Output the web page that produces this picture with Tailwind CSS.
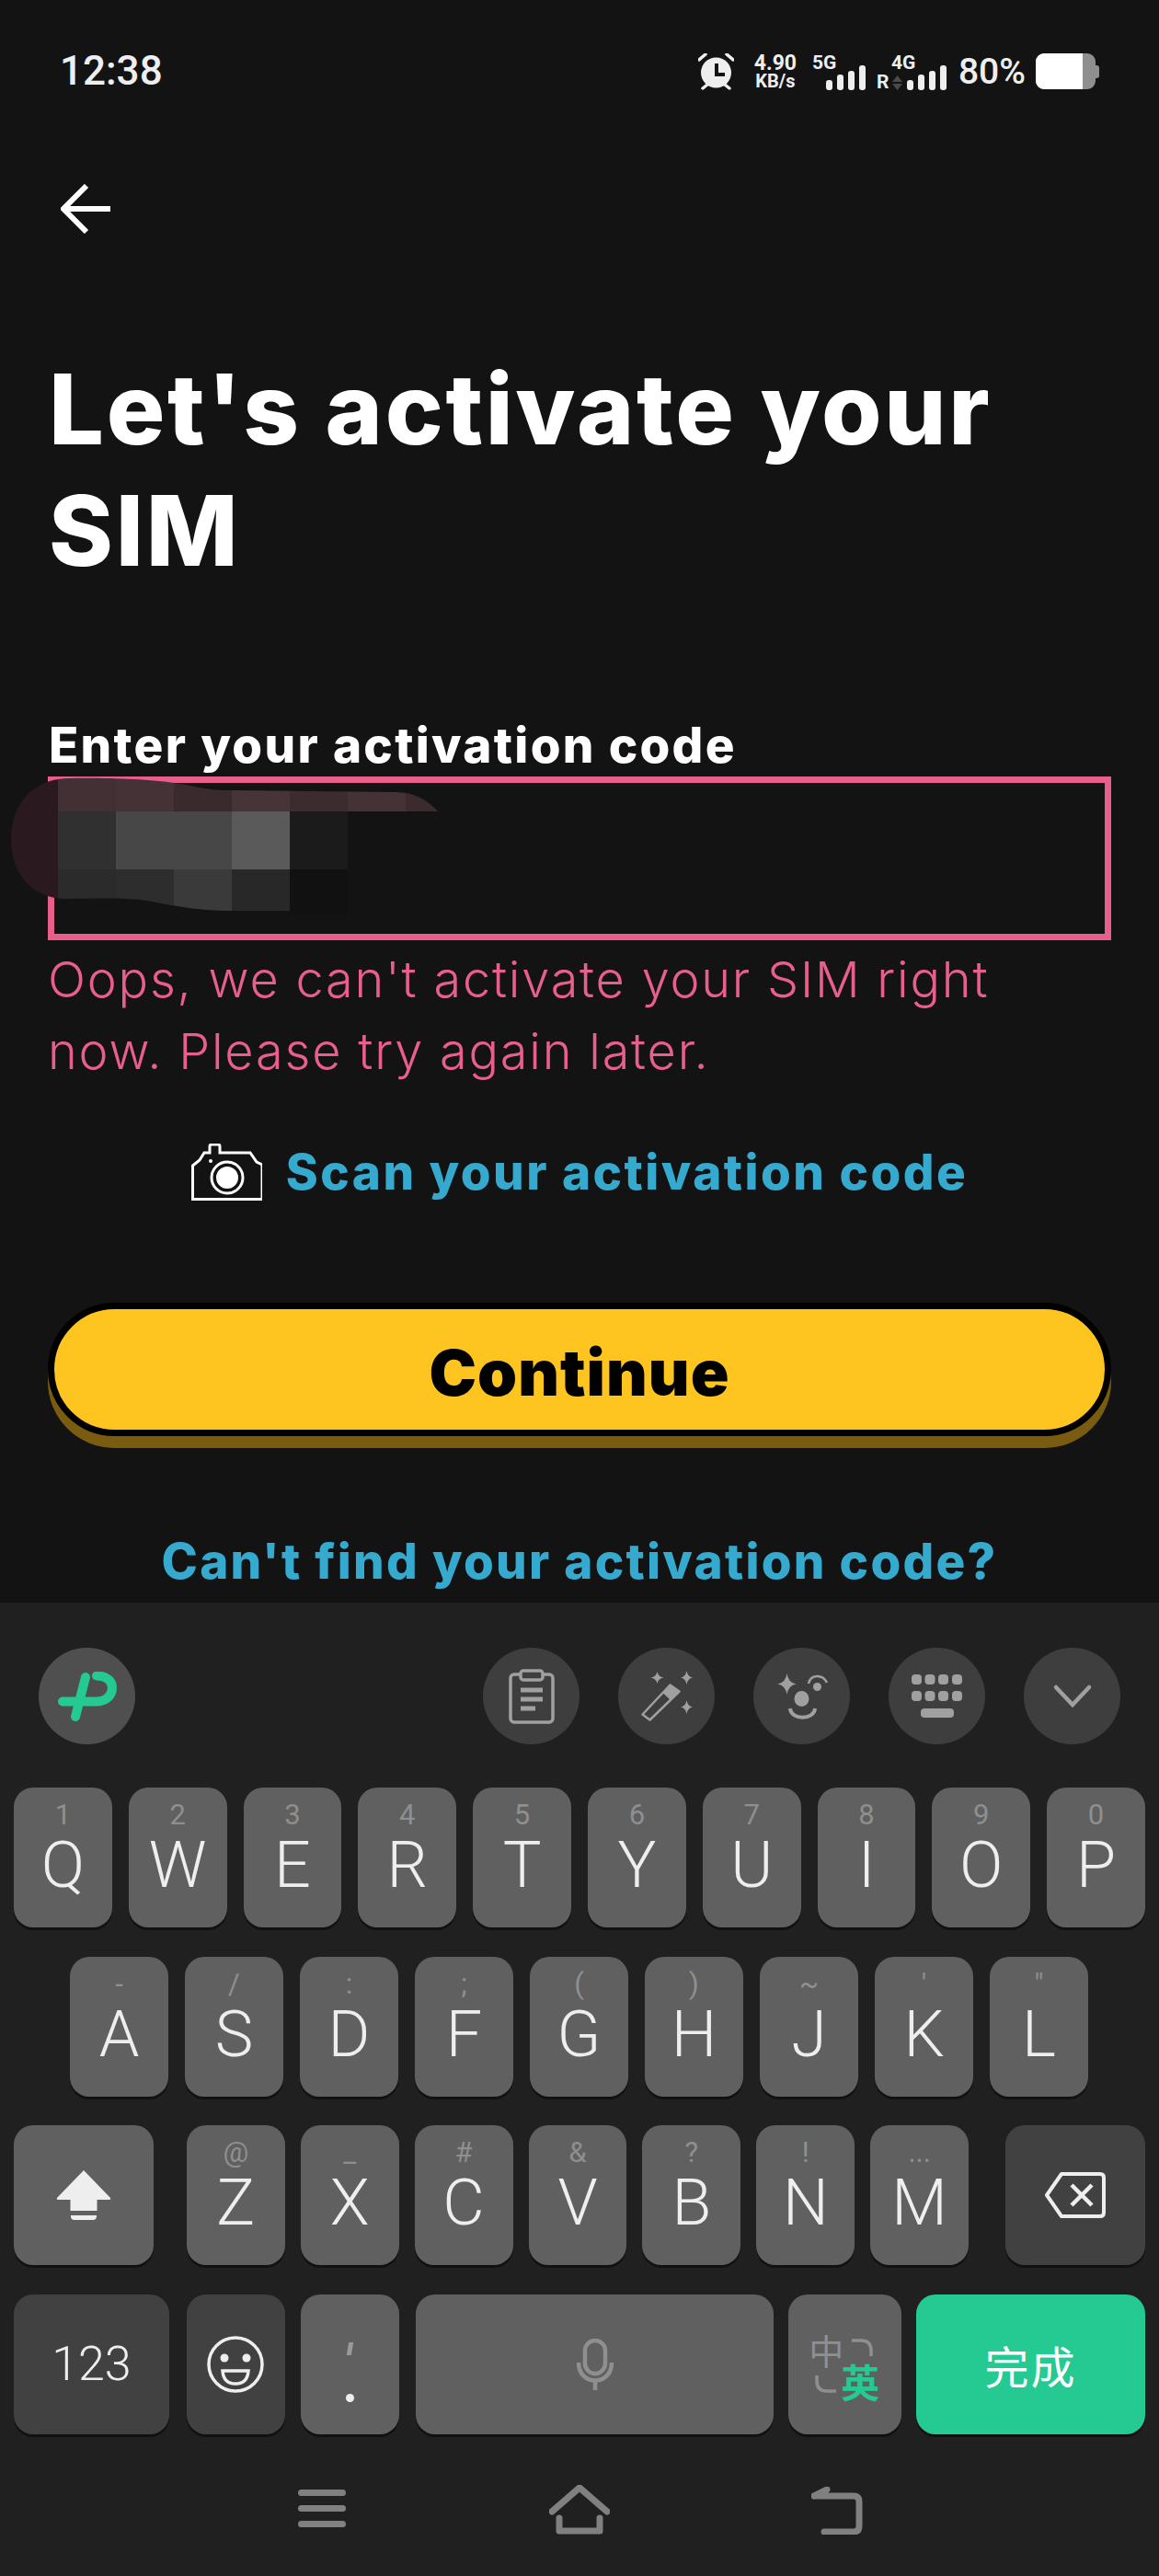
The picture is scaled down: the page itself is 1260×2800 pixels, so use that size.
<!DOCTYPE html>
<html lang="en">
<head>
  <meta charset="UTF-8" />
  <meta name="viewport" content="width=device-width, initial-scale=1.0"/>
  <title>Activate SIM</title>
  <script src="https://cdn.jsdelivr.net/npm/@tailwindcss/browser@4"></script>
</head>
<body class="bg-[#131313] font-['Inter',sans-serif]">
<div class="relative w-[1260px] h-[2800px] overflow-hidden flex flex-col">

  <!-- App area -->
  <div class="h-[1742px] overflow-hidden bg-[#131313] shrink-0">

    <!-- Status bar -->
    <div class="h-[154px] pl-[65px] pr-[65px] pt-[58px] flex justify-between items-start text-[#eeeeee] font-['Roboto',sans-serif]">
      <span class="text-[44px] leading-[39px] font-medium">12:38</span>
      <div class="flex items-start">
        <svg width="39" height="40" viewBox="0 0 39 40" fill="#eeeeee">
          <circle cx="19.5" cy="21" r="16.5"/>
          <path d="M18 11h4v10h7v4H18z" fill="#131313"/>
          <path d="M1 7 8 1M38 7 31 1M5 38l5-4M34 38l-5-4" stroke="#eeeeee" stroke-width="3.5" stroke-linecap="round"/>
        </svg>
        <div class="w-[48px] ml-[21px] flex flex-col items-center font-bold">
          <span class="text-[23px] leading-[21px]">4.90</span>
          <span class="text-[20px] leading-[19px]">KB/s</span>
        </div>
        <div class="w-[59px] ml-[16px] h-[40px] flex flex-col">
          <span class="text-[21px] leading-[20px] font-bold">5G</span>
          <div class="mt-[-9px] ml-[15px] flex items-end gap-[5px] h-[29px]">
            <i class="block w-[7px] h-[11px] rounded-[3px] bg-[#eeeeee]"></i>
            <i class="block w-[7px] h-[17px] rounded-[3px] bg-[#eeeeee]"></i>
            <i class="block w-[7px] h-[21px] rounded-[3px] bg-[#eeeeee]"></i>
            <i class="block w-[7px] h-[27px] rounded-[3px] bg-[#eeeeee]"></i>
          </div>
        </div>
        <div class="w-[76px] ml-[11px] h-[40px] flex flex-col">
          <span class="ml-[16px] text-[21px] leading-[20px] font-bold">4G</span>
          <div class="mt-[-9px] flex items-end h-[29px]">
            <span class="text-[21px] leading-[17px] font-bold w-[17px]">R</span>
            <svg width="11" height="16" viewBox="0 0 11 16" fill="#4a4a4a" class="mr-[5px]"><path d="M5.5 0 11 7H0zM0 9h11l-5.500 7z"/></svg>
            <div class="flex items-end gap-[5px]">
              <i class="block w-[7px] h-[11px] rounded-[3px] bg-[#eeeeee]"></i>
              <i class="block w-[7px] h-[17px] rounded-[3px] bg-[#eeeeee]"></i>
              <i class="block w-[7px] h-[21px] rounded-[3px] bg-[#eeeeee]"></i>
              <i class="block w-[7px] h-[27px] rounded-[3px] bg-[#eeeeee]"></i>
            </div>
          </div>
        </div>
        <span class="ml-[13px] mt-[1px] text-[39px] leading-[38px] font-medium">80%</span>
        <div class="ml-[11px] flex items-center">
          <div class="w-[65px] h-[39px] rounded-[9px] overflow-hidden flex bg-[#8f8f8f]">
            <div class="w-[51px] bg-white"></div>
          </div>
          <div class="w-[4px] h-[14px] rounded-r-[3px] bg-[#8f8f8f]"></div>
        </div>
      </div>
    </div>

    <!-- Back arrow -->
    <div class="px-[66px] h-[150px]">
      <svg width="54" height="54" viewBox="0 0 54 54" fill="none" stroke="white" stroke-width="6" class="mt-[46px]">
        <path d="M4 27h50M28 2 3 27l25 25"/>
      </svg>
    </div>

    <!-- Form -->
    <div class="px-[52px] mt-[29px]">
      <h1 class="ml-[1px] text-[106px] leading-[132px] tracking-[2.7px] font-extrabold text-white">Let's activate your<br>SIM</h1>

      <p class="ml-[1px] mt-[137px] text-[53px] leading-[60px] tracking-[2.3px] font-extrabold text-white">Enter your activation code</p>
      <div class="h-[178px] mt-[4px] border-[7px] border-[#e75f8a]"></div>
      <p class="mt-[4px] text-[54px] leading-[78px] tracking-[1.8px] font-light text-[#e75f8a]">Oops, we can't activate your SIM right<br>now. Please try again later.</p>

      <div class="mt-[61px] flex justify-center items-center gap-[26px]">
        <svg width="77" height="62" viewBox="0 0 77 62" fill="none" stroke="white" stroke-width="3">
          <path d="M1.500 60.500V24L9 18l5-8h6V3q0-2 2-2h7q2 0 2 2v7h33l7 10 6 3v37.500z"/>
          <circle cx="39" cy="37" r="17"/>
          <circle cx="39" cy="37" r="10.500" fill="white"/>
          <circle cx="21" cy="19" r="2" fill="white" stroke="none"/>
        </svg>
        <span class="text-[53px] leading-[60px] tracking-[2.45px] font-extrabold text-[#36a9cf]">Scan your activation code</span>
      </div>

      <button class="relative block w-[1156px] h-[145px] pt-[9px] mt-[111px] rounded-full bg-[#fec41f] border-[7px] border-black shadow-[0_13px_0_#7a5c10] text-[69px] tracking-[1px] font-black text-black">Continue</button>

      <p class="mt-[106px] text-center text-[53px] leading-[60px] tracking-[2.25px] font-extrabold text-[#36a9cf]">Can't find your activation code?</p>
    </div>
  </div>

  <!-- Keyboard -->
  <div class="flex-1 bg-[#202020]">

    <!-- Toolbar -->
    <div class="h-[201px] pt-[49px] pl-[42px] pr-[42px] flex justify-between">
      <div class="w-[105px] h-[105px] rounded-full bg-[#4f4f4f] flex items-center justify-center">
        <svg width="64" height="54" viewBox="0 0 64 54" fill="none" stroke="#25c992" stroke-width="10" stroke-linecap="round">
          <path d="M5 32.500h36c12 0 18-7 18-15 0-8-7-13-17-13"/>
          <path d="M30 6 19 49"/>
        </svg>
      </div>
      <div class="flex gap-[42px]">
        <div class="w-[105px] h-[105px] rounded-full bg-[#3e3e3e] flex items-center justify-center">
          <svg width="50" height="60" viewBox="0 0 50 60" fill="none" stroke="#a0a0a0" stroke-width="3.500">
            <rect x="2" y="6" width="46" height="52" rx="4"/>
            <rect x="13" y="2" width="24" height="10" rx="3" fill="#3e3e3e"/>
            <path d="M13 23h24M13 33h24M13 43h16" stroke-width="5"/>
          </svg>
        </div>
        <div class="w-[105px] h-[105px] rounded-full bg-[#3e3e3e] flex items-center justify-center">
          <svg width="56" height="56" viewBox="0 0 56 56" fill="#a0a0a0">
            <path d="M17.500 1Q18.500 6.500 24.500 7.500 18.500 8.500 17.500 14 16.500 8.500 10.500 7.500 16.500 6.500 17.500 1Z"/>
            <path d="M49.500 0Q50.500 6.500 56 7.500 50.500 8.500 49.500 15 48.500 8.500 43 7.500 48.500 6.500 49.500 0Z"/>
            <path d="M49.500 32Q50.500 38.500 56 39.500 50.500 40.500 49.500 47 48.500 40.500 43 39.500 48.500 38.500 49.500 32Z"/>
            <path d="M1.500 47.500 31.500 15.500 41.500 22.500 9.500 53.500Z" fill="none" stroke="#a0a0a0" stroke-width="2.500" stroke-linejoin="round"/>
            <path d="M23.500 24 31.500 15.500 41.500 22.500 32 32Z"/>
          </svg>
        </div>
        <div class="w-[105px] h-[105px] rounded-full bg-[#3e3e3e] flex items-center justify-center">
          <svg width="56" height="56" viewBox="0 0 56 56" fill="#a0a0a0">
            <path d="M11.500 3Q13 13 21.500 14.500 13 16 11.500 26 10 16 1.500 14.500 10 13 11.500 3Z"/>
            <ellipse cx="27.500" cy="30.500" rx="8" ry="8.500"/>
            <circle cx="44.500" cy="17.500" r="4.500"/>
            <path d="M35 14C37 4 50 3 55 13" fill="none" stroke="#a0a0a0" stroke-width="2.500"/>
            <path d="M15 41c1 13 26 13 27 0" fill="none" stroke="#a0a0a0" stroke-width="4"/>
          </svg>
        </div>
        <div class="w-[105px] h-[105px] rounded-full bg-[#3e3e3e] flex items-center justify-center">
          <svg width="56" height="48" viewBox="0 0 56 48" fill="#a0a0a0">
            <rect x="0" y="0" width="11" height="11" rx="4"/><rect x="14.500" y="0" width="11" height="11" rx="4"/><rect x="29" y="0" width="11" height="11" rx="4"/><rect x="44" y="0" width="11" height="11" rx="4"/>
            <rect x="0" y="18" width="11" height="11" rx="4"/><rect x="14.500" y="18" width="11" height="11" rx="4"/><rect x="29" y="18" width="11" height="11" rx="4"/><rect x="44" y="18" width="11" height="11" rx="4"/>
            <rect x="10" y="37" width="36" height="10" rx="4"/>
          </svg>
        </div>
        <div class="w-[105px] h-[105px] rounded-full bg-[#3e3e3e] flex items-center justify-center">
          <svg width="44" height="28" viewBox="0 0 44 28" fill="none" stroke="#a0a0a0" stroke-width="4.500" stroke-linecap="round"><path d="M4 4l18 19L40 4"/></svg>
        </div>
      </div>
    </div>

    <div class="px-[15px] flex flex-col gap-[31.500px] font-['Roboto',sans-serif] text-[#eeeeee]">
      <!-- Row 1 -->
      <div class="flex gap-[18px] h-[152px]">
        <div class="w-[107px] rounded-[21px] bg-[#606060] shadow-[0_3px_0_#111] flex flex-col items-center pt-[13px]"><span class="text-[31px] leading-[34px] text-[#8f8f8f]">1</span><span class="text-[70px] leading-[74px] font-[350]">Q</span></div>
        <div class="w-[107px] rounded-[21px] bg-[#606060] shadow-[0_3px_0_#111] flex flex-col items-center pt-[13px]"><span class="text-[31px] leading-[34px] text-[#8f8f8f]">2</span><span class="text-[70px] leading-[74px] font-[350]">W</span></div>
        <div class="w-[107px] rounded-[21px] bg-[#606060] shadow-[0_3px_0_#111] flex flex-col items-center pt-[13px]"><span class="text-[31px] leading-[34px] text-[#8f8f8f]">3</span><span class="text-[70px] leading-[74px] font-[350]">E</span></div>
        <div class="w-[107px] rounded-[21px] bg-[#606060] shadow-[0_3px_0_#111] flex flex-col items-center pt-[13px]"><span class="text-[31px] leading-[34px] text-[#8f8f8f]">4</span><span class="text-[70px] leading-[74px] font-[350]">R</span></div>
        <div class="w-[107px] rounded-[21px] bg-[#606060] shadow-[0_3px_0_#111] flex flex-col items-center pt-[13px]"><span class="text-[31px] leading-[34px] text-[#8f8f8f]">5</span><span class="text-[70px] leading-[74px] font-[350]">T</span></div>
        <div class="w-[107px] rounded-[21px] bg-[#606060] shadow-[0_3px_0_#111] flex flex-col items-center pt-[13px]"><span class="text-[31px] leading-[34px] text-[#8f8f8f]">6</span><span class="text-[70px] leading-[74px] font-[350]">Y</span></div>
        <div class="w-[107px] rounded-[21px] bg-[#606060] shadow-[0_3px_0_#111] flex flex-col items-center pt-[13px]"><span class="text-[31px] leading-[34px] text-[#8f8f8f]">7</span><span class="text-[70px] leading-[74px] font-[350]">U</span></div>
        <div class="w-[107px] rounded-[21px] bg-[#606060] shadow-[0_3px_0_#111] flex flex-col items-center pt-[13px]"><span class="text-[31px] leading-[34px] text-[#8f8f8f]">8</span><span class="text-[70px] leading-[74px] font-[350]">I</span></div>
        <div class="w-[107px] rounded-[21px] bg-[#606060] shadow-[0_3px_0_#111] flex flex-col items-center pt-[13px]"><span class="text-[31px] leading-[34px] text-[#8f8f8f]">9</span><span class="text-[70px] leading-[74px] font-[350]">O</span></div>
        <div class="w-[107px] rounded-[21px] bg-[#606060] shadow-[0_3px_0_#111] flex flex-col items-center pt-[13px]"><span class="text-[31px] leading-[34px] text-[#8f8f8f]">0</span><span class="text-[70px] leading-[74px] font-[350]">P</span></div>
      </div>
      <!-- Row 2 -->
      <div class="flex gap-[18px] h-[152px] pl-[61px]">
        <div class="w-[107px] rounded-[21px] bg-[#606060] shadow-[0_3px_0_#111] flex flex-col items-center pt-[13px]"><span class="text-[31px] leading-[34px] text-[#8f8f8f]">-</span><span class="text-[70px] leading-[74px] font-[350]">A</span></div>
        <div class="w-[107px] rounded-[21px] bg-[#606060] shadow-[0_3px_0_#111] flex flex-col items-center pt-[13px]"><span class="text-[31px] leading-[34px] text-[#8f8f8f]">/</span><span class="text-[70px] leading-[74px] font-[350]">S</span></div>
        <div class="w-[107px] rounded-[21px] bg-[#606060] shadow-[0_3px_0_#111] flex flex-col items-center pt-[13px]"><span class="text-[31px] leading-[34px] text-[#8f8f8f]">:</span><span class="text-[70px] leading-[74px] font-[350]">D</span></div>
        <div class="w-[107px] rounded-[21px] bg-[#606060] shadow-[0_3px_0_#111] flex flex-col items-center pt-[13px]"><span class="text-[31px] leading-[34px] text-[#8f8f8f]">;</span><span class="text-[70px] leading-[74px] font-[350]">F</span></div>
        <div class="w-[107px] rounded-[21px] bg-[#606060] shadow-[0_3px_0_#111] flex flex-col items-center pt-[13px]"><span class="text-[31px] leading-[34px] text-[#8f8f8f]">(</span><span class="text-[70px] leading-[74px] font-[350]">G</span></div>
        <div class="w-[107px] rounded-[21px] bg-[#606060] shadow-[0_3px_0_#111] flex flex-col items-center pt-[13px]"><span class="text-[31px] leading-[34px] text-[#8f8f8f]">)</span><span class="text-[70px] leading-[74px] font-[350]">H</span></div>
        <div class="w-[107px] rounded-[21px] bg-[#606060] shadow-[0_3px_0_#111] flex flex-col items-center pt-[13px]"><span class="text-[31px] leading-[34px] text-[#8f8f8f]">~</span><span class="text-[70px] leading-[74px] font-[350]">J</span></div>
        <div class="w-[107px] rounded-[21px] bg-[#606060] shadow-[0_3px_0_#111] flex flex-col items-center pt-[13px]"><span class="text-[31px] leading-[34px] text-[#8f8f8f]">'</span><span class="text-[70px] leading-[74px] font-[350]">K</span></div>
        <div class="w-[107px] rounded-[21px] bg-[#606060] shadow-[0_3px_0_#111] flex flex-col items-center pt-[13px]"><span class="text-[31px] leading-[34px] text-[#8f8f8f]">"</span><span class="text-[70px] leading-[74px] font-[350]">L</span></div>
      </div>
      <!-- Row 3 -->
      <div class="flex gap-[17px] h-[152px]">
        <div class="w-[152px] mr-[19px] rounded-[21px] bg-[#606060] shadow-[0_3px_0_#111] flex items-center justify-center">
          <svg width="60" height="54" viewBox="0 0 60 54" fill="#eeeeee"><path d="M30 0 59 30q1 2-2 2H44.500v12h-29V32H3q-3 0-2-2z"/><path d="M16 49h28v1q0 4-4 4H20q-4 0-4-4z"/></svg>
        </div>
        <div class="w-[107px] rounded-[21px] bg-[#606060] shadow-[0_3px_0_#111] flex flex-col items-center pt-[13px]"><span class="text-[31px] leading-[34px] text-[#8f8f8f]">@</span><span class="text-[70px] leading-[74px] font-[350]">Z</span></div>
        <div class="w-[107px] rounded-[21px] bg-[#606060] shadow-[0_3px_0_#111] flex flex-col items-center pt-[13px]"><span class="text-[31px] leading-[34px] text-[#8f8f8f]">_</span><span class="text-[70px] leading-[74px] font-[350]">X</span></div>
        <div class="w-[107px] rounded-[21px] bg-[#606060] shadow-[0_3px_0_#111] flex flex-col items-center pt-[13px]"><span class="text-[31px] leading-[34px] text-[#8f8f8f]">#</span><span class="text-[70px] leading-[74px] font-[350]">C</span></div>
        <div class="w-[107px] rounded-[21px] bg-[#606060] shadow-[0_3px_0_#111] flex flex-col items-center pt-[13px]"><span class="text-[31px] leading-[34px] text-[#8f8f8f]">&amp;</span><span class="text-[70px] leading-[74px] font-[350]">V</span></div>
        <div class="w-[107px] rounded-[21px] bg-[#606060] shadow-[0_3px_0_#111] flex flex-col items-center pt-[13px]"><span class="text-[31px] leading-[34px] text-[#8f8f8f]">?</span><span class="text-[70px] leading-[74px] font-[350]">B</span></div>
        <div class="w-[107px] rounded-[21px] bg-[#606060] shadow-[0_3px_0_#111] flex flex-col items-center pt-[13px]"><span class="text-[31px] leading-[34px] text-[#8f8f8f]">!</span><span class="text-[70px] leading-[74px] font-[350]">N</span></div>
        <div class="w-[107px] rounded-[21px] bg-[#606060] shadow-[0_3px_0_#111] flex flex-col items-center pt-[13px]"><span class="text-[31px] leading-[34px] text-[#8f8f8f]">...</span><span class="text-[70px] leading-[74px] font-[350]">M</span></div>
        <div class="w-[152px] ml-[23px] rounded-[21px] bg-[#414141] shadow-[0_3px_0_#111] flex items-center justify-center">
          <svg width="66" height="50" viewBox="0 0 66 50" fill="none" stroke="#eeeeee" stroke-width="4">
            <path d="M18 2h42q4 0 4 4v38q0 4-4 4H18L2 25z" stroke-linejoin="round"/>
            <path d="M29 14l22 22M51 14 29 36" stroke-width="4.500"/>
          </svg>
        </div>
      </div>
      <!-- Row 4 -->
      <div class="flex h-[152px]">
        <div class="w-[169px] mr-[19px] rounded-[21px] bg-[#414141] shadow-[0_3px_0_#111] flex items-center justify-center text-[52px] font-light">123</div>
        <div class="w-[107px] mr-[17px] rounded-[21px] bg-[#414141] shadow-[0_3px_0_#111] flex items-center justify-center">
          <svg width="62" height="62" viewBox="0 0 62 62" fill="none" stroke="#eeeeee" stroke-width="3.500">
            <circle cx="31" cy="31" r="29"/>
            <circle cx="19" cy="24" r="4.500" fill="#eeeeee" stroke="none"/>
            <circle cx="43" cy="24" r="4.500" fill="#eeeeee" stroke="none"/>
            <path d="M17 38h28q-1 14-14 14T17 38z"/>
          </svg>
        </div>
        <div class="w-[107px] mr-[18px] rounded-[21px] bg-[#606060] shadow-[0_3px_0_#111] flex flex-col items-center pt-[52px]">
          <span class="block w-[5px] h-[14px] bg-[#9a9a9a] skew-x-[-10deg]"></span>
          <span class="block w-[9px] h-[9px] mt-[42px] rounded-full bg-[#eeeeee]"></span>
        </div>
        <div class="w-[390px] mr-[16px] rounded-[21px] bg-[#606060] shadow-[0_3px_0_#111] flex items-center justify-center">
          <svg width="40" height="56" viewBox="0 0 40 56" fill="none" stroke="#8f8f8f" stroke-width="4.500">
            <rect x="9" y="2" width="22" height="36" rx="11"/>
            <path d="M2 26c0 26 36 26 36 0M20 44v12"/>
          </svg>
        </div>
        <div class="relative w-[123px] mr-[16px] rounded-[21px] bg-[#606060] shadow-[0_3px_0_#111] font-['Noto_Sans_CJK_SC',sans-serif]">
          <span class="absolute left-[22px] top-[40px] text-[38px] leading-[40px] text-[#8f8f8f]">中</span>
          <span class="absolute left-[57px] top-[72px] text-[42px] leading-[44px] font-bold text-[#25c992]">英</span>
          <svg width="70" height="62" viewBox="0 0 70 62" fill="none" stroke="#8f8f8f" stroke-width="3.500" class="absolute left-[26px] top-[46px]">
            <path d="M43 4h10q11 0 11 11v6M5 42v6q0 11 11 11h10"/>
          </svg>
        </div>
        <div class="w-[249px] rounded-[21px] bg-[#25c992] shadow-[0_3px_0_#111] flex items-center justify-center text-white text-[48px] font-['Noto_Sans_CJK_SC',sans-serif] tracking-[2px]">完成</div>
      </div>
    </div>

    <!-- Navigation bar -->
    <div class="mt-[55px] flex items-start">
      <div class="ml-[324px] mt-[5px] w-[52px] flex flex-col gap-[10px]">
        <i class="block h-[7px] rounded-full bg-[#808080]"></i>
        <i class="block h-[7px] rounded-full bg-[#808080]"></i>
        <i class="block h-[7px] rounded-full bg-[#808080]"></i>
      </div>
      <svg width="66" height="54" viewBox="0 0 66 54" fill="none" stroke="#808080" stroke-width="7" stroke-linecap="round" stroke-linejoin="round" class="ml-[221px]">
        <path d="M3 29 33 3l30 26M11 36v14h44V36"/>
      </svg>
      <svg width="56" height="52" viewBox="0 0 56 52" fill="none" stroke="#808080" stroke-width="7" stroke-linecap="round" stroke-linejoin="round" class="ml-[219px] mt-[2px]">
        <path d="M3 10h43q6 0 6 6v27q0 6-6 6H14M3 10l14-7"/>
      </svg>
    </div>
  </div>

  <!-- Masked activation code, drawn over the input -->
  <svg width="500" height="160" viewBox="0 840 500 160" class="absolute left-0 top-[840px]">
    <defs>
      <clipPath id="mask">
        <path d="M72 846C100 845 160 846 190 851S225 859 250 859L430 861C450 861 466 870 476 882H378V994H315V990H250C220 990 190 985 165 980S100 977 72 977C35 977 12 950 12 912S35 848 72 846Z"/>
      </clipPath>
    </defs>
    <g clip-path="url(#mask)">
      <rect x="0" y="840" width="63" height="160" fill="#2a1a1f"/>
      <rect x="63" y="840" width="63" height="42" fill="#433035"/>
      <rect x="126" y="840" width="63" height="42" fill="#453237"/>
      <rect x="189" y="840" width="63" height="42" fill="#3a2a2e"/>
      <rect x="252" y="840" width="63" height="42" fill="#463438"/>
      <rect x="315" y="840" width="63" height="42" fill="#3c2b2f"/>
      <rect x="378" y="840" width="63" height="42" fill="#453236"/>
      <rect x="441" y="840" width="63" height="42" fill="#3b2b2f"/>
      <rect x="63" y="882" width="63" height="63" fill="#303030"/>
      <rect x="126" y="882" width="126" height="63" fill="#474747"/>
      <rect x="252" y="882" width="63" height="63" fill="#5a5a5a"/>
      <rect x="315" y="882" width="63" height="63" fill="#1b1b1b"/>
      <rect x="63" y="945" width="63" height="55" fill="#2b2b2b"/>
      <rect x="126" y="945" width="63" height="55" fill="#2d2d2d"/>
      <rect x="189" y="945" width="63" height="55" fill="#3a3a3a"/>
      <rect x="252" y="945" width="63" height="55" fill="#282828"/>
      <rect x="315" y="945" width="63" height="55" fill="#111111"/>
    </g>
  </svg>
</div>
</body>
</html>
